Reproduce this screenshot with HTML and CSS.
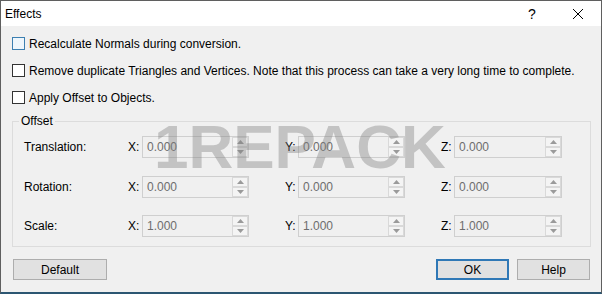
FILE: index.html
```html
<!DOCTYPE html>
<html>
  <head>
    <link rel="stylesheet" href="styles.css">
  </head>
  <body>
    <div class="window">
      <div class="titlebar">
        <span class="title">Effects</span>
        <span class="help">?</span>
        <span class="close">
          <svg width="12" height="12" viewBox="0 0 12 12">
            <path d="M1 1 L11 11 M11 1 L1 11" stroke="#000" stroke-width="1" fill="none"/>
          </svg>
        </span>
      </div>

      <div class="content">
        <div class="check focused"><span class="box"></span>Recalculate Normals during conversion.</div>
        <div class="check"><span class="box"></span>Remove duplicate Triangles and Vertices. Note that this process can take a very long time to complete.</div>
        <div class="check"><span class="box"></span>Apply Offset to Objects.</div>

        <fieldset class="group">
          <legend>Offset</legend>
          <div id="grid" class="grid"></div>
        </fieldset>

        <div class="buttons">
          <div class="btn default">Default</div>
          <div class="spacer"></div>
          <div class="btn ok">OK</div>
          <div class="btn help-btn">Help</div>
        </div>
      </div>

      <div class="watermark">1REPACK</div>
    </div>

    <script>
    const rows = [
      ["Translation:", "0.000"],
      ["Rotation:", "0.000"],
      ["Scale:", "1.000"]
    ];

    const arrowUp = '<svg width="7" height="4" viewBox="0 0 7 4"><path d="M0 4 L3.5 0 L7 4 Z" fill="#9a9a9a"/></svg>';
    const arrowDown = '<svg width="7" height="4" viewBox="0 0 7 4"><path d="M0 0 L3.5 4 L7 0 Z" fill="#9a9a9a"/></svg>';

    const grid = document.getElementById('grid');
    for (let [name, value] of rows) {
        let label = document.createElement('div');
        label.classList.add('row-label');
        label.appendChild(document.createTextNode(name));
        grid.appendChild(label);

        for (let axis of ["X", "Y", "Z"]) {
            let field = document.createElement('div');
            field.classList.add('field');
            field.classList.add('field-' + axis.toLowerCase());
            field.innerHTML = '<span class="axis">' + axis + ':</span>' +
                '<span class="spin"><span class="value">' + value + '</span>' +
                '<span class="arrows"><span class="arrow">' + arrowUp + '</span>' +
                '<span class="arrow">' + arrowDown + '</span></span></span>';
            grid.appendChild(field);
        }
    }
    </script>
  </body>
</html>
```

FILE: styles.css
```css
body {
    margin: 0;
    font-family: "Liberation Sans", Arial, sans-serif;
    font-size: 12px;
    color: #000;
}
.window {
    position: relative;
    width: 602px;
    height: 294px;
    box-sizing: border-box;
    border: 1px solid #5f5f5f;
    border-bottom: 2px solid #2c5672;
    background-color: #f0f0f0;
    overflow: hidden;
}
.titlebar {
    height: 25px;
    background-color: #fff;
    display: flex;
    align-items: center;
}
.title {
    padding-left: 4px;
    flex: 1;
}
.help {
    font-size: 14px;
    width: 46px;
    text-align: center;
}
.close {
    width: 46px;
    display: flex;
    justify-content: center;
}
.content {
    padding: 4px 10px 0 11px;
}
.check {
    height: 27px;
    display: flex;
    align-items: center;
    white-space: nowrap;
}
.box {
    flex-shrink: 0;
    width: 11px;
    height: 11px;
    border: 1px solid #333;
    background-color: #fff;
    margin-right: 4px;
}
.check.focused .box {
    border-color: #3c7fb1;
    background-color: #eef6fc;
}
.group {
    margin: 3px 0 0 0;
    padding: 8px 0 9px 11px;
    border: 1px solid #dcdcdc;
    width: 579px;
    box-sizing: border-box;
}
.group legend {
    padding: 0 2px;
    margin-left: -5px;
    line-height: 14px;
}
.grid {
    display: grid;
    grid-template-columns: 104px 121px 156px 157px;
    row-gap: 17.5px;
    align-items: center;
}
.field {
    display: flex;
    align-items: center;
    justify-self: end;
}
.field-x,
.field-z {
    width: 121px;
}
.field-y {
    width: 120px;
}
.axis {
    flex: 1;
}
.spin {
    width: 107px;
    height: 22px;
    box-sizing: border-box;
    border: 1px solid #cfcfcf;
    display: flex;
    align-items: center;
    color: #6d6d6d;
}
.field-z .spin {
    width: 108px;
}
.value {
    flex: 1;
    padding-left: 4px;
}
.arrows {
    width: 16px;
    height: 20px;
    display: flex;
    flex-direction: column;
}
.arrow {
    flex: 1;
    border: 1px solid #d9d9d9;
    background-color: #f4f4f4;
    display: flex;
    align-items: center;
    justify-content: center;
}
.buttons {
    display: flex;
    gap: 8px;
    margin-top: 12px;
    padding-left: 1px;
    padding-right: 1px;
}
.spacer {
    flex: 1;
}
.btn {
    height: 21px;
    box-sizing: border-box;
    border: 1px solid #adadad;
    background-color: #e1e1e1;
    display: flex;
    align-items: center;
    justify-content: center;
}
.default {
    width: 94px;
}
.ok {
    width: 73px;
    border: 2px solid #2f78b6;
}
.help-btn {
    width: 73px;
}
.watermark {
    position: absolute;
    left: 153px;
    top: 110px;
    font-family: "Liberation Sans", sans-serif;
    font-weight: bold;
    font-size: 62px;
    color: rgba(128, 128, 128, 0.4);
    pointer-events: none;
}
```
